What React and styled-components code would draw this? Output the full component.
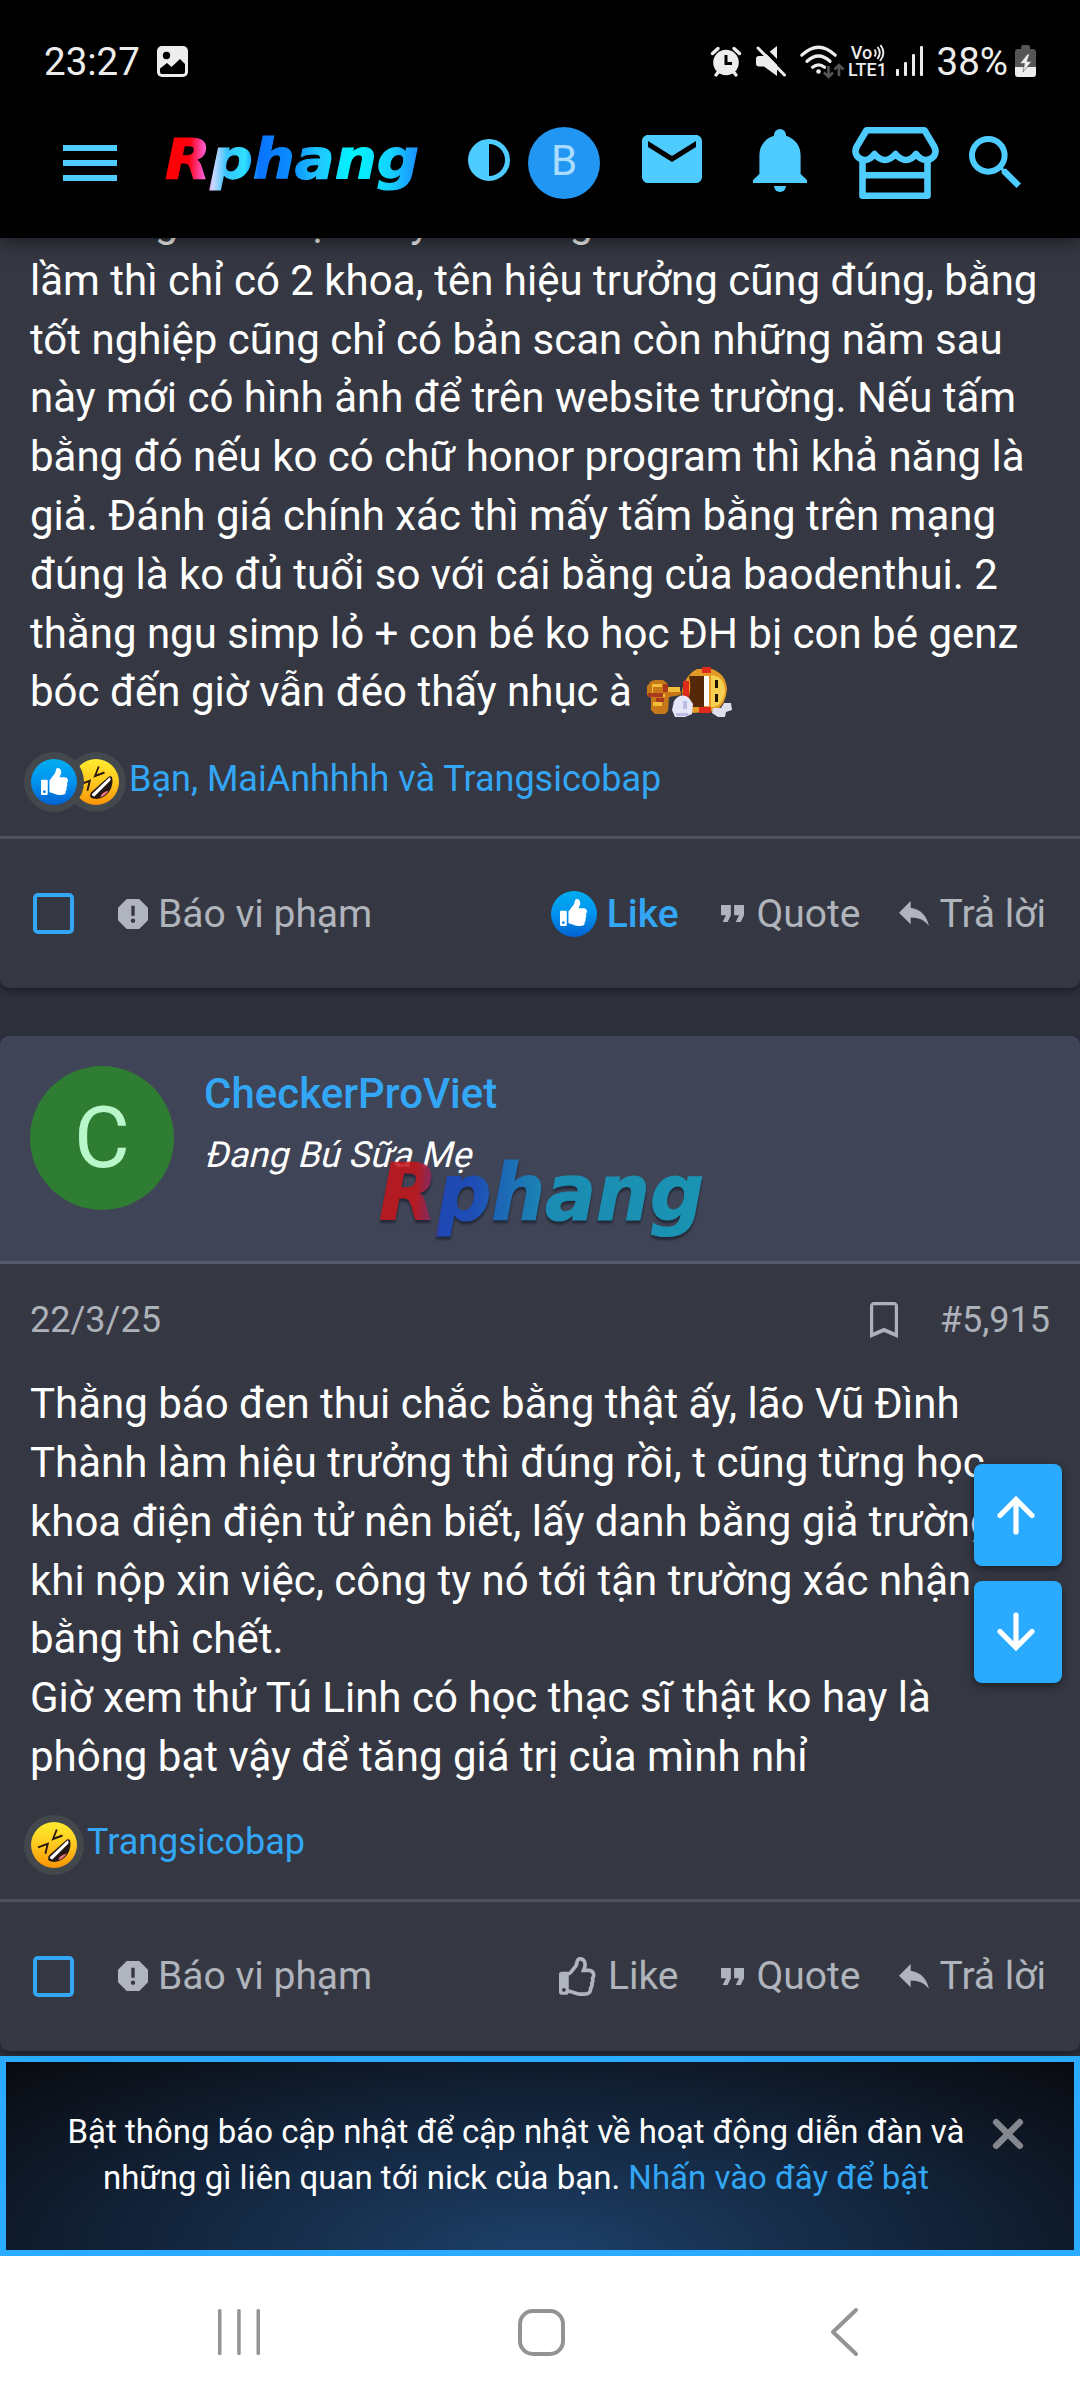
import React from 'react';
import styled, { createGlobalStyle } from 'styled-components';
import { FaThumbsUp, FaRegThumbsUp } from 'react-icons/fa';

const GlobalStyle = createGlobalStyle`
  * {
    box-sizing: border-box;
  }
  body {
    margin: 0;
    background: #2f323d;
    font-family: Roboto, "Noto Sans", sans-serif;
    color: #fff;
  }
  svg {
    display: block;
    flex: none;
    overflow: visible;
  }
`;

const firstPost = [
  'và đúng theo đại thầy nó đúng',
  'lầm thì chỉ có 2 khoa, tên hiệu trưởng cũng đúng, bằng',
  'tốt nghiệp cũng chỉ có bản scan còn những năm sau',
  'này mới có hình ảnh để trên website trường. Nếu tấm',
  'bằng đó nếu ko có chữ honor program thì khả năng là',
  'giả. Đánh giá chính xác thì mấy tấm bằng trên mạng',
  'đúng là ko đủ tuổi so với cái bằng của baodenthui. 2',
  'thằng ngu simp lỏ + con bé ko học ĐH bị con bé genz',
  'bóc đến giờ vẫn đéo thấy nhục à',
];

const secondPost = [
  'Thằng báo đen thui chắc bằng thật ấy, lão Vũ Đình',
  'Thành làm hiệu trưởng thì đúng rồi, t cũng từng học',
  'khoa điện điện tử nên biết, lấy danh bằng giả trường',
  'khi nộp xin việc, công ty nó tới tận trường xác nhận',
  'bằng thì chết.',
  'Giờ xem thử Tú Linh có học thạc sĩ thật ko hay là',
  'phông bạt vậy để tăng giá trị của mình nhỉ',
];

const Glyph = ({ w, h, box, children, ...rest }) => (
  <svg width={w} height={h} viewBox={box || `0 0 ${w} ${h}`} fill="currentColor" {...rest}>
    {children}
  </svg>
);

const LogoText = ({ id, w, h, size, baseline, stops, shadow }) => (
  <svg width={w} height={h} viewBox={`0 0 ${w} ${h}`}>
    <defs>
      <linearGradient id={id} gradientUnits="userSpaceOnUse" x1="0" y1="0" x2={w} y2={h * 0.2}>
        {stops.map(([offset, color]) => (
          <stop key={offset} offset={offset} stopColor={color} />
        ))}
      </linearGradient>
    </defs>
    <LogoLetters
      x="0"
      y={baseline}
      textLength={w + 2}
      lengthAdjust="spacingAndGlyphs"
      fontSize={size}
      fill={`url(#${id})`}
      stroke={`url(#${id})`}
      $shadow={shadow}
    >
      Rphang
    </LogoLetters>
  </svg>
);

const StatusIcons = () => (
  <>
    <Glyph w={30} h={29}>
      <circle cx="15" cy="15.5" r="12.8" />
      <path d="M1.500 6.500 7 1.500M28.500 6.500 23 1.500M5 28l4-5M25 28l-4-5" stroke="currentColor" strokeWidth="3.400" strokeLinecap="round" />
      <path d="M15 8v8.500h6" stroke="#000" strokeWidth="3" fill="none" />
    </Glyph>
    <Gap $w={15} />
    <Glyph w={30} h={30}>
      <path d="M0 13q0-3 3-3h5L21 0v30L8 20.500H3q-3 0-3-3z" />
      <path d="M4 -1.500 31 26" stroke="#000" strokeWidth="4" />
      <path d="M2 2 28.500 29" stroke="currentColor" strokeWidth="3" strokeLinecap="round" />
    </Glyph>
    <Gap $w={14} />
    <Glyph w={44} h={33}>
      <g fill="none" stroke="currentColor" strokeWidth="3.200" strokeLinecap="round">
        <path d="M1.800 10.200q16.700-16 33.400 0" />
        <path d="M7 16.300q11.500-10.600 23 0" />
        <path d="M12.600 22.300q6-5 12 0" />
      </g>
      <circle cx="18.500" cy="26.500" r="2.300" />
      <g fill="none" stroke="#555" strokeWidth="2.600">
        <path d="M28.500 21v11M24 27.500l4.500 4.500 4.500-4.500" />
        <path d="M39 31V20M34.500 24.500 39 20l4.500 4.500" />
      </g>
    </Glyph>
    <Gap $w={5} />
    <Volte>
      <VolteTop>
        Vo
        <Glyph w={11} h={16}>
          <path d="M1.500 4.500q2.500 3.500 0 7M4.500 2q4.500 5.500 0 12M7.500 0q6 8-.5 16" fill="none" stroke="currentColor" strokeWidth="1.900" />
        </Glyph>
      </VolteTop>
      <span>LTE1</span>
    </Volte>
    <Gap $w={9} />
    <Glyph w={27} h={30}>
      <rect x="0" y="23" width="3" height="7" rx="1" />
      <rect x="8" y="16" width="3" height="14" rx="1" />
      <rect x="16" y="8" width="3" height="22" rx="1" />
      <rect x="24" y="0" width="3" height="30" rx="1" />
    </Glyph>
    <Gap $w={14} />
    <StatusText>38%</StatusText>
    <Gap $w={7} />
    <Glyph w={21} h={32}>
      <path d="M6 2q0-2 2-2h5q2 0 2 2v2h3q3 0 3 3v15H0V7q0-3 3-3h3z" fill="#555" />
      <path d="M0 22h21v7q0 3-3 3H3q-3 0-3-3z" />
      <path d="M12.500 9 5 18.500h4.500L8 27l8.500-10.500H12L14.500 9z" stroke="#555" strokeWidth=".6" />
    </Glyph>
  </>
);

const LikeBadge = () => (
  <LikeCircle>
    <FaThumbsUp size={27} />
  </LikeCircle>
);

const Rofl = () => (
  <svg width="46" height="46" viewBox="0 0 46 46">
    <defs>
      <linearGradient id="face" x1="0" y1="0" x2="0" y2="1">
        <stop offset="0" stopColor="#ffec2e" />
        <stop offset=".5" stopColor="#ffc81f" />
        <stop offset="1" stopColor="#fb9305" />
      </linearGradient>
    </defs>
    <circle cx="23" cy="23" r="23" fill="url(#face)" />
    <path d="M25.800 7.500 22 17l9.500-3.500M7 25.300l9.800-3.500-2.400 10" fill="none" stroke="#2a1a10" strokeWidth="1.900" />
    <path d="M17.300 35.500q-1.500 4 6 4.500 8-.5 13-7.500 4.500-7 2.700-14.500-2-1.600-4.500.8L18 33.500q-.8 1-.7 2z" fill="#231815" />
    <path d="M18.700 35.300 36.600 18.200q1.500 1 .8 3.200L21.300 37.500q-2.300-.4-2.600-2.200z" fill="#fff" />
    <path d="M27.500 38.300q0-4.500 8.200-6.800-3 5-8.200 6.800z" fill="#e8717c" />
  </svg>
);

const Emoticon = () => (
  <Glyph w={87} h={51}>
    <path d="M3 17q0-3 6-4h8l4 3v7l14 1v4l-12 2-1 14-3 3H9L5 43V31l-4-3V19z" fill="#c67718" />
    <path d="M6 17h10v3H7v7h12v3H6zM7 35h9v4H7zM22 20h12v5H22z" fill="#f3bd3a" />
    <path d="M17 17h5v8h-5zM2 26h15v4H2zM10 31h8v4h-8z" fill="#aa3a1d" />
    <path d="M51 2h15q14 5 15 20-1 16-12 22l-22 2q-11-8-11-23 4-16 15-21z" fill="#e39a25" />
    <path d="M56 0h9v6h-9zM53 40h12v6H53zM37 14h6v17h-6z" fill="#e02b1c" />
    <path d="M43 9h15v31H46l-4-7q4-12 1-24z" fill="#552808" />
    <rect x="58" y="9" width="5" height="30" fill="#fff" />
    <path d="M65 8q14 1 14 17-2 13-11 15h-3z" fill="#f4cf51" />
    <path d="M69 13h3v8h-3zM69 27h3v8h-3z" fill="#221500" />
    <path d="M28 34q7-9 15-3l4 6-1 10-7 3H29l-3-7z" fill="#e6e6fa" />
    <path d="M30 46h12v3H30zM37 34h4v8h-4z" fill="#bcbce0" />
    <path d="M67 41h8l3-5h7l1 7-6 2-1 5h-7l-6-4z" fill="#dedeee" />
  </Glyph>
);

const PostFooter = ({ liked }) => (
  <Footer>
    <Checkbox />
    <Action $left={44} $gap={10}>
      <Glyph w={30} h={30} box="3 3 18 18">
        <path d="M15.730 3H8.270L3 8.270v7.460L8.270 21h7.460L21 15.730V8.270L15.730 3zM12 17.300c-.72 0-1.300-.58-1.300-1.300s.58-1.300 1.300-1.300 1.300.58 1.300 1.300-.58 1.300-1.300 1.300zm1-4.300h-2V7h2v6z" />
      </Glyph>
      Báo vi phạm
    </Action>
    <Spacer />
    <Action $active={liked} $gap={10}>
      {liked ? <LikeBadge /> : <FaRegThumbsUp size={39} />}
      Like
    </Action>
    <Action $left={42} $gap={13}>
      <Glyph w={23} h={17} box="5 7 14 10" preserveAspectRatio="none">
        <path d="M6 17h3l2-4V7H5v6h3zm8 0h3l2-4V7h-6v6h3z" />
      </Glyph>
      Quote
    </Action>
    <Action $left={38} $gap={11}>
      <Glyph w={30} h={25} box="3 5 18 15">
        <path d="M10 9V5l-7 7 7 7v-4.100c5 0 8.500 1.600 11 5.100-1-5-4-10-11-11z" />
      </Glyph>
      Trả lời
    </Action>
  </Footer>
);

const App = () => (
  <Screen>
    <GlobalStyle />
    <TopBar>
      <StatusBar>
        <StatusText>23:27</StatusText>
        <Gap $w={17} />
        <Glyph w={31} h={31}>
          <rect width="31" height="31" rx="5" />
          <circle cx="9.500" cy="9.500" r="3.700" fill="#000" />
          <path d="M3 22.500 10 17l4.500 4L23 13l5 5v8q0 2-2 2H5q-2 0-2-2z" fill="#000" />
        </Glyph>
        <Spacer />
        <StatusIcons />
      </StatusBar>
      <NavRow>
        <Glyph w={54} h={36}>
          <path d="M0 0h54v6H0zM0 15h54v6H0zM0 30h54v6H0z" />
        </Glyph>
        <Item $left={48}>
          <LogoText
            id="logo"
            w={252}
            h={58}
            size={56}
            baseline={44}
            stops={[
              [0, '#f00'],
              [0.1, '#ff0010'],
              [0.16, '#ff5ad0'],
              [0.2, '#c9d8ff'],
              [0.25, '#35c4ff'],
              [0.32, '#2fe0ff'],
              [0.38, '#0a73ff'],
              [0.5, '#0a8dff'],
              [0.62, '#1fc8ff'],
              [0.75, '#00f6ff'],
              [0.9, '#14d2ff'],
              [1, '#1a93ff'],
            ]}
          />
        </Item>
        <Item $left={51} $lift={6}>
          <Glyph w={42} h={42}>
            <circle cx="21" cy="21" r="18.500" fill="none" stroke="currentColor" strokeWidth="5" />
            <path d="M21 1a20 20 0 0 0 0 40z" />
          </Glyph>
        </Item>
        <Item $left={18}>
          <Avatar $size={72} $bg="#2196f3" $fg="#a9dcff" $font={42} $lift={4}>B</Avatar>
        </Item>
        <Item $left={42} $lift={8}>
          <Glyph w={60} h={48} box="2 4 20 16">
            <path d="M20 4H4c-1.100 0-2 .9-2 2v12c0 1.100.9 2 2 2h16c1.100 0 2-.9 2-2V6c0-1.100-.9-2-2-2zm0 4l-8 5-8-5V6l8 5 8-5v2z" />
          </Glyph>
        </Item>
        <Item $left={51} $lift={5}>
          <Glyph w={54} h={63}>
            <path d="M27 0a6 6 0 0 1 6 6v.8C42 9.500 47.600 17 47.600 26v19l6.400 6v3H0v-3l6.400-6V26C6.400 17 12 9.500 21 6.800V6a6 6 0 0 1 6-6z" />
            <path d="M21 57h12a6 6 0 0 1-12 0z" />
          </Glyph>
        </Item>
        <Item $left={45}>
          <Glyph w={87} h={72} fill="none" stroke="#4ecbff" strokeWidth="6.600">
            <path d="M14.500 3.300h58L82.500 20Q84.800 25 82 29q-3 4-8 4-5.500 0-10-6-4.500 6-10 6t-10.500-6q-5 6-10.500 6t-10.500-6q-4.500 6-9.500 6t-8-4q-2.800-4-.5-9z" strokeLinejoin="round" />
            <path d="M10.500 33v35.700h65V33M10.500 48.300h65" strokeLinejoin="round" />
          </Glyph>
        </Item>
        <Item $left={30} $lift={2}>
          <Glyph w={52} h={52} box="3 3 17.500 17.500">
            <path d="M9.500 3A6.500 6.500 0 0 1 16 9.500c0 1.610-.59 3.090-1.560 4.230l.27.27h.79l5 5-1.500 1.500-5-5v-.79l-.27-.27A6.516 6.516 0 0 1 9.500 16 6.500 6.500 0 0 1 3 9.500 6.500 6.500 0 0 1 9.500 3m0 2C7 5 5 7 5 9.500S7 14 9.500 14 14 12 14 9.500 12 5 9.500 5z" />
          </Glyph>
        </Item>
      </NavRow>
    </TopBar>

    <Thread>
      <Post>
        <Scrolled>
          {firstPost.map((line, i) => (
            <Line key={line}>
              {line}
              {i === firstPost.length - 1 && (
                <Smilie>
                  <Emoticon />
                </Smilie>
              )}
            </Line>
          ))}
        </Scrolled>
        <Reactions $h={114} $top={6}>
          <Ring $z={2}>
            <LikeBadge />
          </Ring>
          <Ring $overlap>
            <Rofl />
          </Ring>
          <ReactionText>Bạn, MaiAnhhhh và Trangsicobap</ReactionText>
        </Reactions>
        <PostFooter liked />
      </Post>

      <Post $gap>
        <UserBar>
          <Avatar $size={144} $bg="#2e7d32" $fg="#b9f6ca" $font={86}>C</Avatar>
          <UserInfo>
            <UserName>CheckerProViet</UserName>
            <UserTitle>Đang Bú Sữa Mẹ</UserTitle>
          </UserInfo>
          <Watermark>
            <LogoText
              id="mark"
              w={323}
              h={84}
              size={78}
              baseline={62}
              shadow
              stops={[
                [0, '#c4161c'],
                [0.12, '#c4161c'],
                [0.17, '#8a2a6a'],
                [0.2, '#1a48c0'],
                [0.3, '#1a50c4'],
                [0.42, '#1878c4'],
                [0.55, '#1797c0'],
                [1, '#169fc0'],
              ]}
            />
          </Watermark>
        </UserBar>
        <Attribution>
          22/3/25
          <Spacer />
          <Glyph w={28} h={36} box="5 3 14 18">
            <path d="M17 3H7c-1.100 0-2 .9-2 2v16l7-3 7 3V5c0-1.100-.9-2-2-2zm.4 15.300L12 15.900l-5.400 2.400V4.600h10.800z" />
          </Glyph>
          <PostNumber>#5,915</PostNumber>
        </Attribution>
        <Body>
          {secondPost.map((line) => (
            <Line key={line}>{line}</Line>
          ))}
        </Body>
        <Reactions $h={112} $top={5}>
          <Ring>
            <Rofl />
          </Ring>
          <ReactionText>Trangsicobap</ReactionText>
        </Reactions>
        <PostFooter />
      </Post>
    </Thread>

    <ScrollButtons>
      <ScrollButton>
        <Glyph w={38} h={38} fill="none" stroke="#fff" strokeWidth="5.200" strokeLinecap="round">
          <path d="M19 36V5M3 19.500 19 3.500l16 16" />
        </Glyph>
      </ScrollButton>
      <ScrollButton>
        <Glyph w={38} h={38} fill="none" stroke="#fff" strokeWidth="5.200" strokeLinecap="round">
          <path d="M19 2v31M3 18.500l16 16 16-16" />
        </Glyph>
      </ScrollButton>
    </ScrollButtons>

    <Notice>
      <NoticeText>
        <div>Bật thông báo cập nhật để cập nhật về hoạt động diễn đàn và</div>
        <div>
          những gì liên quan tới nick của bạn. <Link>Nhấn vào đây để bật</Link>
        </div>
      </NoticeText>
      <Close>
        <Glyph w={30} h={30} stroke="currentColor" strokeWidth="6.500" strokeLinecap="round">
          <path d="M3.200 3.200l23.600 23.600M26.800 3.200 3.200 26.800" />
        </Glyph>
      </Close>
    </Notice>

    <SystemNav>
      <Glyph w={42} h={46}>
        <rect width="3.500" height="46" rx="1.500" />
        <rect x="19.200" width="3.500" height="46" rx="1.500" />
        <rect x="38.500" width="3.500" height="46" rx="1.500" />
      </Glyph>
      <Item $left={258}>
        <Glyph w={47} h={47} fill="none" stroke="currentColor" strokeWidth="4">
          <rect x="2" y="2" width="43" height="43" rx="13" />
        </Glyph>
      </Item>
      <Item $left={266}>
        <Glyph w={27} h={48} fill="none" stroke="currentColor" strokeWidth="4" strokeLinecap="round" strokeLinejoin="round">
          <path d="M25 2 2 24l23 22" />
        </Glyph>
      </Item>
    </SystemNav>
  </Screen>
);

const Screen = styled.div`
  position: relative;
  display: flex;
  flex-direction: column;
  width: 1080px;
  height: 2400px;
  overflow: hidden;
`;

const TopBar = styled.header`
  position: relative;
  z-index: 3;
  flex: none;
  height: 238px;
  background: #000;
  box-shadow: 0 4px 18px rgba(0, 0, 0, 0.5);
`;

const StatusBar = styled.div`
  display: flex;
  align-items: center;
  height: 122px;
  padding: 0 44px;
  color: #ededed;
`;

const StatusText = styled.span`
  font-size: 38.5px;
`;

const Gap = styled.div`
  flex: none;
  width: ${({ $w }) => $w}px;
`;

const Spacer = styled.div`
  flex: 1;
`;

const Volte = styled.div`
  display: flex;
  flex-direction: column;
  align-items: center;
  width: 38px;
  font-size: 18px;
  font-weight: 500;
  line-height: 17px;
`;

const VolteTop = styled.div`
  display: flex;
  align-items: center;
  gap: 1px;
`;

const NavRow = styled.nav`
  display: flex;
  align-items: center;
  height: 82px;
  padding-left: 63px;
  color: #4ecbff;
`;

const Item = styled.div`
  flex: none;
  margin-left: ${({ $left }) => $left}px;
  margin-bottom: ${({ $lift }) => $lift || 0}px;
`;

const LogoLetters = styled.text`
  font-family: "DejaVu Sans", sans-serif;
  font-weight: 700;
  font-style: italic;
  stroke-width: 1.2px;
  ${({ $shadow }) => $shadow && 'filter: drop-shadow(0 3px 1px rgba(10, 16, 30, 0.6));'}
`;

const Avatar = styled.div`
  display: flex;
  flex: none;
  align-items: center;
  justify-content: center;
  width: ${({ $size }) => $size}px;
  height: ${({ $size }) => $size}px;
  padding-bottom: ${({ $lift }) => $lift || 0}px;
  border-radius: 50%;
  background: ${({ $bg }) => $bg};
  color: ${({ $fg }) => $fg};
  font-size: ${({ $font }) => $font}px;
  line-height: 1;
`;

const Thread = styled.main`
  flex: none;
  height: 1818px;
`;

const Post = styled.article`
  margin-top: ${({ $gap }) => ($gap ? 48 : 0)}px;
  background: #353842;
  border-radius: 9px;
  box-shadow: 0 3px 9px rgba(8, 10, 24, 0.55);
`;

const Body = styled.div`
  padding-left: 30px;
  font-size: 42px;
`;

const Scrolled = styled(Body)`
  margin-top: -45px;
`;

const Line = styled.div`
  display: flex;
  height: 58.8px;
  line-height: 58.8px;
  white-space: nowrap;
`;

const Smilie = styled.span`
  margin: 4px 0 0 14px;
`;

const Reactions = styled.div`
  display: flex;
  align-items: center;
  height: ${({ $h }) => $h}px;
  padding: ${({ $top }) => $top}px 0 0 24px;
`;

const Ring = styled.div`
  position: relative;
  z-index: ${({ $z }) => $z || 1};
  flex: none;
  padding: 7px;
  margin-left: ${({ $overlap }) => ($overlap ? -18 : 0)}px;
  border-radius: 50%;
  background: #42484c;
`;

const ReactionText = styled.span`
  margin: 0 0 7px 3px;
  color: #33a7f5;
  font-size: 36px;
`;

const LikeCircle = styled.div`
  display: flex;
  align-items: center;
  justify-content: center;
  width: 46px;
  height: 46px;
  padding-bottom: 2px;
  border-radius: 50%;
  background: linear-gradient(180deg, #02adef, #0093f0 50%, #0062d0);
  color: #fff;
`;

const Footer = styled.footer`
  display: flex;
  align-items: center;
  height: 152px;
  padding: 0 34px 0 33px;
  border-top: 3px solid #4d515d;
  color: #b0b4bc;
  font-size: 39px;
`;

const Checkbox = styled.div`
  width: 41px;
  height: 41px;
  border: 4px solid #33a7f5;
  border-radius: 5px;
`;

const Action = styled.div`
  display: flex;
  align-items: center;
  gap: ${({ $gap }) => $gap}px;
  margin-left: ${({ $left }) => $left || 0}px;
  color: ${({ $active }) => ($active ? '#33a7f5' : 'inherit')};
  font-weight: ${({ $active }) => ($active ? 500 : 400)};
`;

const UserBar = styled.div`
  position: relative;
  display: flex;
  gap: 30px;
  height: 228px;
  padding: 30px;
  border-bottom: 3px solid #555b6b;
  border-radius: 9px 9px 0 0;
  background: #3f4456;
`;

const UserInfo = styled.div`
  display: flex;
  flex-direction: column;
  gap: 9px;
`;

const UserName = styled.div`
  color: #33a7f5;
  font-size: 42px;
  font-weight: 500;
  line-height: 55px;
`;

const UserTitle = styled.div`
  font-size: 36px;
  line-height: 50px;
  transform: skewX(-14deg);
  transform-origin: 0 75%;
`;

const Watermark = styled.div`
  position: absolute;
  top: 122px;
  left: 379px;
  opacity: 0.88;
`;

const Attribution = styled.div`
  display: flex;
  align-items: center;
  height: 111px;
  padding: 0 30px;
  color: #adb1b9;
  font-size: 36px;
`;

const PostNumber = styled.span`
  margin-left: 42px;
`;

const ScrollButtons = styled.div`
  position: absolute;
  z-index: 2;
  top: 1464px;
  right: 18px;
  display: flex;
  flex-direction: column;
  gap: 15px;
`;

const ScrollButton = styled.div`
  display: flex;
  align-items: center;
  justify-content: center;
  width: 88px;
  height: 102px;
  padding-right: 4px;
  border-radius: 8px;
  background: #2aabff;
  box-shadow: 0 3px 9px rgba(0, 0, 0, 0.45);
`;

const Notice = styled.section`
  position: relative;
  z-index: 2;
  display: flex;
  flex: none;
  height: 200px;
  padding: 47px 0 0;
  border: 6px solid #2aabff;
  background: radial-gradient(ellipse at bottom, #1d4069 0%, #090a0f 100%);
`;

const NoticeText = styled.div`
  width: 1020px;
  font-size: 33px;
  line-height: 46.2px;
  text-align: center;
  white-space: nowrap;
`;

const Link = styled.a`
  color: #33a7f5;
`;

const Close = styled.div`
  padding-top: 10px;
  margin-left: -33px;
  color: #84878e;
`;

const SystemNav = styled.nav`
  display: flex;
  flex: 1;
  align-items: center;
  padding: 8px 0 0 218px;
  background: #fff;
  color: #939393;
`;

export default App;
